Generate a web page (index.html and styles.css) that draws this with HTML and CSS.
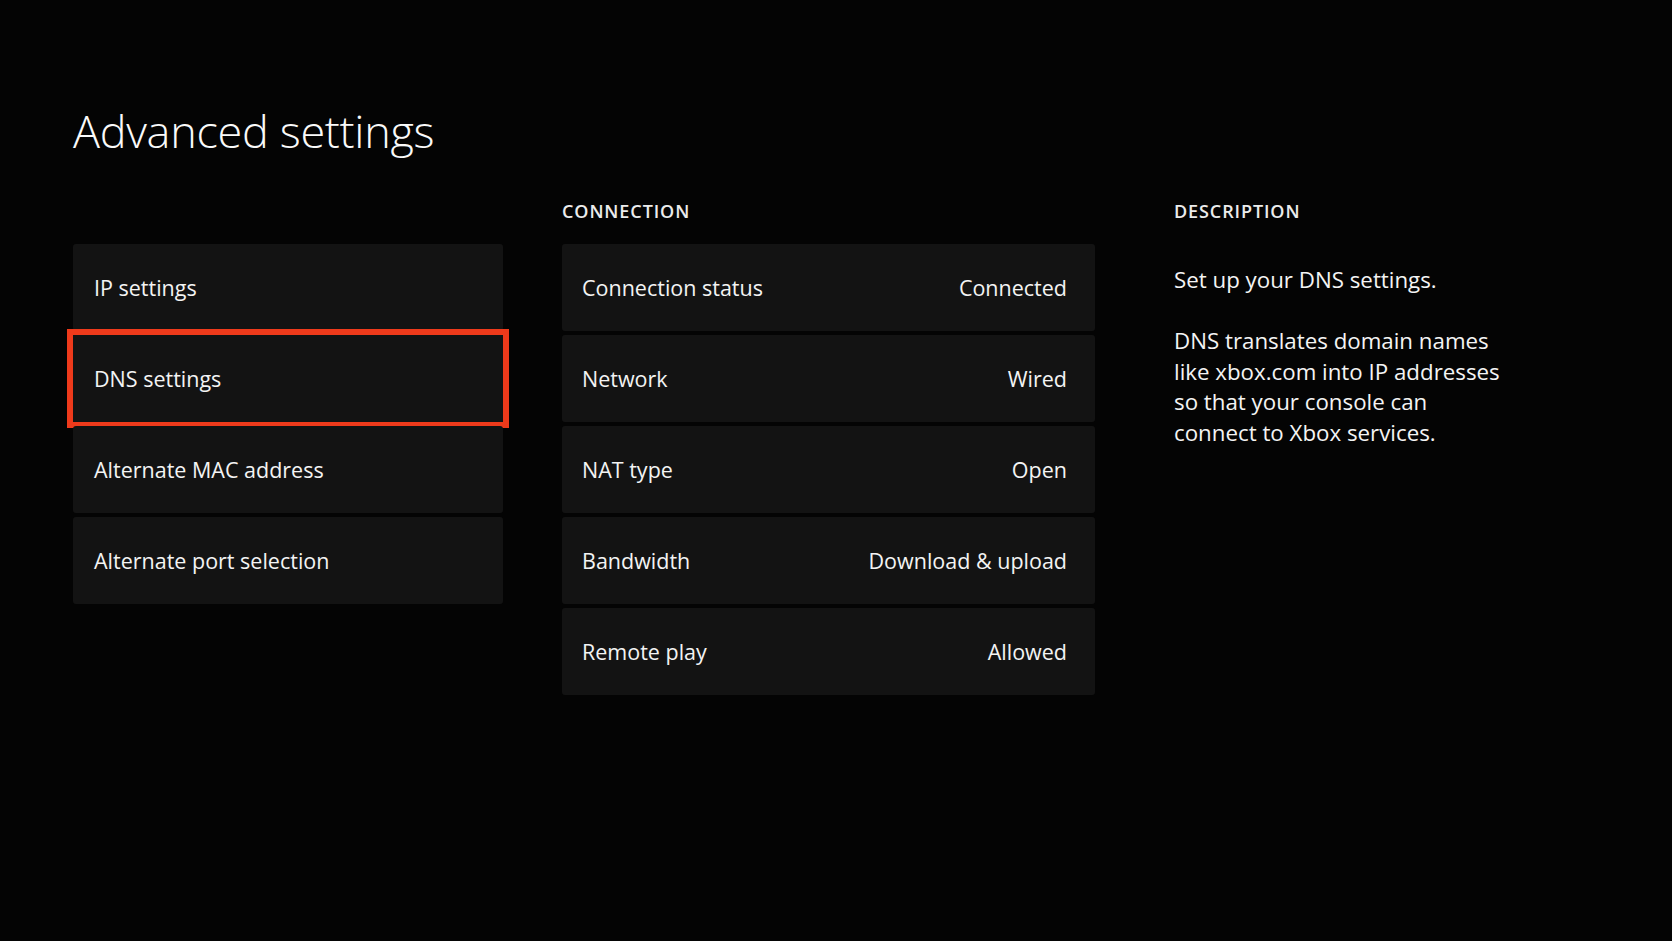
FILE: index.html
```html
<!DOCTYPE html>
<html lang="en">
  <head>
    <meta charset="UTF-8" />
    <meta name="viewport" content="width=device-width, initial-scale=1.0" />
    <title>Advanced settings</title>
    <link rel="stylesheet" href="styles.css">
  </head>
  <body>
  <div class="page">
      <h1 class="title">Advanced settings</h1>

      <div class="columns">
          <div class="col col-menu">
              <h2 class="heading">&nbsp;</h2>
              <div class="list">
                  <div class="tile">IP settings</div>
                  <div class="tile selected">DNS settings</div>
                  <div class="tile">Alternate MAC address</div>
                  <div class="tile">Alternate port selection</div>
              </div>
          </div>

          <div class="col col-info">
              <h2 class="heading">CONNECTION</h2>
              <div class="list">
                  <div class="tile"><span>Connection status</span><span>Connected</span></div>
                  <div class="tile"><span>Network</span><span>Wired</span></div>
                  <div class="tile"><span>NAT type</span><span>Open</span></div>
                  <div class="tile"><span>Bandwidth</span><span>Download &amp; upload</span></div>
                  <div class="tile"><span>Remote play</span><span>Allowed</span></div>
              </div>
          </div>

          <div class="col col-desc">
              <h2 class="heading">DESCRIPTION</h2>
              <div class="desc">
                  <p>Set up your DNS settings.</p>
                  <p>DNS translates domain names<br>like xbox.com into IP addresses<br>so that your console can<br>connect to Xbox services.</p>
              </div>
          </div>
      </div>
  </div>
  </body>
</html>
```

FILE: styles.css
```css
body {
  background-color: #040404;
  color: #f4f4f4;
  font-family: "Open Sans", "Noto Sans", sans-serif;
  margin: 0;
  height: 100vh;
  overflow: hidden;
}

.page {
  padding: 108px 0 0 73px;
}

.title {
  font-size: 45px;
  font-weight: 300;
  line-height: 1;
  margin: 0 0 46px;
  color: #fafafa;
  letter-spacing: -0.3px;
}

.columns {
  display: flex;
  align-items: flex-start;
}

.col-menu {
  width: 430px;
  margin-right: 59px;
}

.col-info {
  width: 533px;
  margin-right: 79px;
}

.heading {
  font-size: 18px;
  font-weight: 600;
  line-height: 24px;
  letter-spacing: 0.9px;
  margin: 0 0 21px;
  color: #ececec;
}

.list {
  display: flex;
  flex-direction: column;
  gap: 4px;
}

.tile {
  background-color: #131313;
  border-radius: 3px;
  height: 87px;
  display: flex;
  align-items: center;
  justify-content: space-between;
  padding: 0 28px 0 20px;
  font-size: 21.5px;
  box-sizing: border-box;
}

.col-menu .tile {
  padding-left: 21px;
}

.tile.selected {
  outline: 6px solid #ee3a1b;
  outline-offset: 0;
  border-radius: 0;
}

.desc {
  padding-top: 21px;
  font-size: 22.3px;
  line-height: 30.5px;
}

.desc p {
  margin: 0 0 30.5px;
}
```
